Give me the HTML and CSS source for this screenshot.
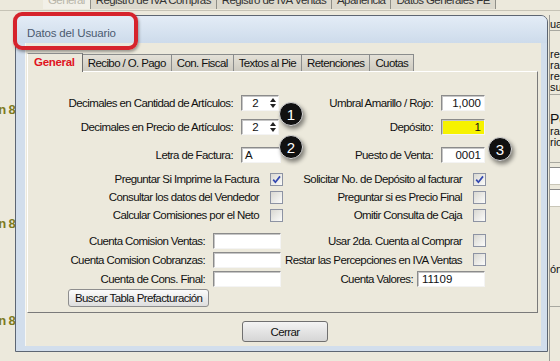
FILE: index.html
```html
<!DOCTYPE html>
<html lang="es">
<head>
    <meta charset="UTF-8">
    <title>Datos del Usuario</title>
    <link rel="stylesheet" href="styles.css">
</head>
<body>
<div class="screen">
    <!-- background application, partly hidden behind the dialog -->
    <div class="app-tabs">
        <span class="app-tab current">General</span>
        <span class="app-tab">Registro de IVA Compras</span>
        <span class="app-tab">Registro de IVA Ventas</span>
        <span class="app-tab">Apariencia</span>
        <span class="app-tab">Datos Generales FE</span>
    </div>

    <div class="app-body">
        <div class="left-strip">
            <div class="strip-label first">n 8</div>
            <div class="strip-label second">n 8</div>
            <div class="strip-label third">n 8</div>
        </div>

        <div class="dialog">
            <div class="titlebar">Datos del Usuario</div>
            <div class="frame">
                <div class="client">
                    <div class="tabs">
                        <span class="tab active">General</span>
                        <span class="tab">Recibo / O. Pago</span>
                        <span class="tab">Con. Fiscal</span>
                        <span class="tab">Textos al Pie</span>
                        <span class="tab">Retenciones</span>
                        <span class="tab">Cuotas</span>
                    </div>

                    <div class="panel">
                        <div class="top-grid">
                            <span class="label">Decimales en Cantidad de Artículos:</span>
                            <div class="field spin">
                                <span class="spin-value">2</span>
                                <span class="spin-arrows"><i class="arrow up"></i><i class="arrow down"></i></span>
                            </div>
                            <span class="label">Umbral Amarillo / Rojo:</span>
                            <div class="field num">1,000</div>

                            <span class="label">Decimales en Precio de Artículos:</span>
                            <div class="field spin">
                                <span class="spin-value">2</span>
                                <span class="spin-arrows"><i class="arrow up"></i><i class="arrow down"></i></span>
                            </div>
                            <span class="label">Depósito:</span>
                            <div class="field num yellow">1</div>

                            <span class="label">Letra de Factura:</span>
                            <div class="field">A</div>
                            <span class="label">Puesto de Venta:</span>
                            <div class="field num">0001</div>
                        </div>

                        <div class="checks">
                            <div class="check-row">Preguntar Si Imprime la Factura <span class="checkbox checked"><svg width="9" height="9" viewBox="0 0 9 9"><path d="M1.2 4.6 L3.4 7.2 L8 1.4" fill="none" stroke="#3348b0" stroke-width="1.7"/></svg></span></div>
                            <div class="check-row">Solicitar No. de Depósito al facturar <span class="checkbox checked"><svg width="9" height="9" viewBox="0 0 9 9"><path d="M1.2 4.6 L3.4 7.2 L8 1.4" fill="none" stroke="#3348b0" stroke-width="1.7"/></svg></span></div>
                            <div class="check-row">Consultar los datos del Vendedor <span class="checkbox"></span></div>
                            <div class="check-row">Preguntar si es Precio Final <span class="checkbox"></span></div>
                            <div class="check-row">Calcular Comisiones por el Neto <span class="checkbox"></span></div>
                            <div class="check-row">Omitir Consulta de Caja <span class="checkbox"></span></div>
                        </div>

                        <div class="accounts">
                            <div class="account-row">Cuenta Comision Ventas: <span class="field wide"></span></div>
                            <div class="check-row">Usar 2da. Cuenta al Comprar <span class="checkbox"></span></div>
                            <div class="account-row">Cuenta Comision Cobranzas: <span class="field wide"></span></div>
                            <div class="check-row">Restar las Percepciones en IVA Ventas <span class="checkbox"></span></div>
                            <div class="account-row">Cuenta de Cons. Final: <span class="field wide"></span></div>
                            <div class="account-row tight">Cuenta Valores: <span class="field wide">11109</span></div>
                            <div class="button-row"><button class="btn">Buscar Tabla Prefacturación</button></div>
                        </div>
                    </div>

                    <div class="footer">
                        <button class="btn btn-close">Cerrar</button>
                    </div>
                </div>
            </div>
        </div>

        <div class="right-strip">
            <div class="rs-head">uar</div>
            <div class="rs-block">
                <div>ren</div>
                <div>rac</div>
                <div>res</div>
                <div>su</div>
            </div>
            <div class="rs-block second">
                <div class="rs-big">Pe</div>
                <div>rac</div>
                <div>rio</div>
            </div>
            <div class="rs-input"></div>
            <div class="rs-input"></div>
            <div class="rs-block third">ón</div>
        </div>
    </div>

    <!-- annotations drawn over the screenshot -->
    <div class="highlight"></div>
    <div class="badge badge-1">1</div>
    <div class="badge badge-2">2</div>
    <div class="badge badge-3">3</div>
</div>
</body>
</html>
```

FILE: styles.css
```css
* {
    box-sizing: border-box;
}

body {
    margin: 0;
    width: 560px;
    height: 361px;
    overflow: hidden;
    background: #ece9dc;
    font-family: "Liberation Sans", Arial, sans-serif;
    font-size: 11.5px;
    letter-spacing: -0.6px;
    color: #111;
}

.screen {
    position: relative;
    height: 361px;
}

/* background application */
.app-tabs {
    display: flex;
    height: 11px;
    padding-left: 43px;
    overflow: hidden;
    border-bottom: 1px solid #c6c3b6;
}

.app-tab {
    height: 16px;
    margin-top: -7px;
    padding: 0 5px;
    line-height: 14px;
    border-right: 1px solid #8f8f88;
    background: #dcd9cd;
    color: #333;
    white-space: nowrap;
}

.app-tab.current {
    background: #f2f0e8;
    color: #b9b6aa;
}

.app-body {
    display: flex;
    height: 350px;
    padding-top: 4px;
}

.left-strip {
    width: 15px;
    display: flex;
    flex-direction: column;
    overflow: hidden;
}

.strip-label {
    display: flex;
    justify-content: flex-end;
    height: 16px;
    white-space: nowrap;
    font-weight: bold;
    font-size: 13px;
    letter-spacing: -0.7px;
    line-height: 16px;
    color: #7c7a1e;
}

.strip-label.first {
    margin-top: 87px;
}

.strip-label.second {
    margin-top: 98px;
}

.strip-label.third {
    margin-top: 81px;
}

/* dialog */
.dialog {
    width: 533px;
    height: 337px;
    display: flex;
    flex-direction: column;
    border: 1px solid #5d6673;
    border-radius: 7px 7px 0 0;
    background: #d2deec;
    overflow: hidden;
}

.titlebar {
    height: 27px;
    padding: 7px 0 0 11px;
    display: flex;
    align-items: center;
    background: linear-gradient(to bottom, #e3ecf6, #cddbeb);
    font-size: 11.5px;
    letter-spacing: -0.15px;
    color: #4b5a70;
}

.frame {
    flex: 1;
    display: flex;
    padding: 0 6px 5px 9px;
}

.client {
    flex: 1;
    display: flex;
    flex-direction: column;
    padding: 10px 3px 0 1px;
    border-left: 1px solid #f7f7f3;
    background: #ece9dc;
}

.tabs {
    display: flex;
    align-items: flex-end;
    height: 18px;
    position: relative;
    z-index: 1;
}

.tab {
    height: 17px;
    padding: 0 5px;
    line-height: 16px;
    border: 1px solid #8a8c8c;
    border-bottom: none;
    border-left: none;
    background: linear-gradient(to bottom, #e4e1d8, #cdcac0);
    white-space: nowrap;
}

.tab.active {
    height: 19px;
    margin-bottom: -1px;
    padding: 0 7px 0 6px;
    border-left: 1px solid #fff;
    border-right-color: #6e6e6e;
    background: #ece9dc;
    color: #e0141e;
    font-weight: bold;
    letter-spacing: -0.3px;
}

.panel {
    height: 242px;
    border: 1px solid;
    border-color: #fff #7a7a7a #7a7a7a #fff;
    padding-top: 21px;
}

.top-grid {
    display: grid;
    grid-template-columns: 205px 40px 144px 44px;
    grid-template-rows: 18px 24px 28px;
    column-gap: 8px;
    align-items: end;
}

.label {
    height: 16px;
    line-height: 16px;
    text-align: right;
    white-space: nowrap;
}

.field {
    display: block;
    height: 16px;
    padding: 0 3px;
    line-height: 14px;
    border: 1px solid;
    border-color: #8b8b8b #f4f4f4 #f4f4f4 #8b8b8b;
    box-shadow: inset 1px 1px 0 #c6c6c6;
    background: #fff;
    white-space: nowrap;
    letter-spacing: 0;
}

.field.num {
    text-align: right;
}

.field.yellow {
    background: #f6f200;
}

.field.spin {
    display: flex;
    width: 38px;
    padding: 0 1px 0 0;
}

.spin-value {
    flex: 1;
    text-align: center;
}

.spin-arrows {
    width: 8px;
    display: flex;
    flex-direction: column;
    justify-content: center;
    gap: 2px;
}

.arrow {
    width: 0;
    height: 0;
    margin: 0 auto;
    border-left: 3px solid transparent;
    border-right: 3px solid transparent;
}

.arrow.up {
    border-bottom: 4px solid #222;
}

.arrow.down {
    border-top: 4px solid #222;
}

.checks,
.accounts {
    display: grid;
    grid-template-columns: 255px 203px;
}

.checks {
    margin-top: 7px;
    grid-auto-rows: 18px;
}

.accounts {
    margin-top: 7px;
    grid-auto-rows: 19px;
}

.check-row,
.account-row {
    display: flex;
    justify-content: flex-end;
    align-items: center;
    gap: 11px;
    white-space: nowrap;
}

.account-row {
    gap: 8px;
}

.account-row.tight {
    gap: 4px;
}

.field.wide {
    width: 68px;
    margin-right: 2px;
}

.account-row.tight .field.wide {
    margin-right: 1px;
    padding-left: 4px;
}

.checkbox {
    width: 13px;
    height: 13px;
    flex: none;
    display: flex;
    align-items: center;
    justify-content: center;
    border: 1px solid #8d93a3;
    background: linear-gradient(135deg, #d9d8d2, #fbfbfa);
}

.button-row {
    display: flex;
    align-items: flex-end;
    padding-left: 40px;
}

.btn {
    height: 18px;
    padding: 0 6px;
    border: 1px solid #8e8e8e;
    border-radius: 3px;
    background: linear-gradient(to bottom, #fbfbfb, #dedede);
    font-family: inherit;
    font-size: 11.5px;
    letter-spacing: inherit;
    color: #111;
    white-space: nowrap;
}

.footer {
    flex: 1;
    display: flex;
    justify-content: center;
    padding: 8px 0 0 5px;
}

.btn-close {
    width: 86px;
    height: 21px;
    border-color: #707070;
    background: linear-gradient(to bottom, #f4f4f4, #e4e4e4 50%, #d6d6d6);
}

/* right edge of the background application */
.right-strip {
    flex: 1;
    margin-left: 1px;
    display: flex;
    flex-direction: column;
    overflow: hidden;
    border-left: 1px solid #9a9a96;
    font-size: 11px;
    line-height: 11px;
    letter-spacing: 0;
    white-space: nowrap;
}

.rs-head {
    height: 16px;
    padding-top: 4px;
    border-bottom: 1px solid #a8a8a0;
}

.rs-block {
    height: 64px;
    padding-top: 18px;
    border-bottom: 1px solid #a8a8a0;
}

.rs-block.second {
    height: 68px;
    padding-top: 17px;
}

.rs-big {
    height: 14px;
    font-size: 14px;
    line-height: 14px;
}

.rs-input {
    height: 18px;
    margin-top: 4px;
    border-top: 1px solid #8b8b8b;
    border-bottom: 1px solid #c9c6b8;
    background: #fff;
}

.rs-block.third {
    height: 100px;
    padding-top: 57px;
}

/* annotations */
.highlight {
    position: absolute;
    left: 13px;
    top: 12px;
    width: 125px;
    height: 38px;
    border: 4px solid #d6232c;
    border-radius: 9px;
    box-shadow: 1px 2px 3px rgba(0, 0, 0, 0.35);
}

.badge {
    position: absolute;
    width: 24px;
    height: 24px;
    display: flex;
    align-items: center;
    justify-content: center;
    border: 1px solid #d8d8d8;
    border-radius: 50%;
    background: #111;
    box-shadow: 2px 3px 4px rgba(0, 0, 0, 0.45);
    font-size: 15px;
    letter-spacing: 0;
    color: #fff;
}

.badge-1 {
    left: 279px;
    top: 102px;
}

.badge-2 {
    left: 279px;
    top: 135px;
}

.badge-3 {
    left: 488px;
    top: 137px;
}
```
